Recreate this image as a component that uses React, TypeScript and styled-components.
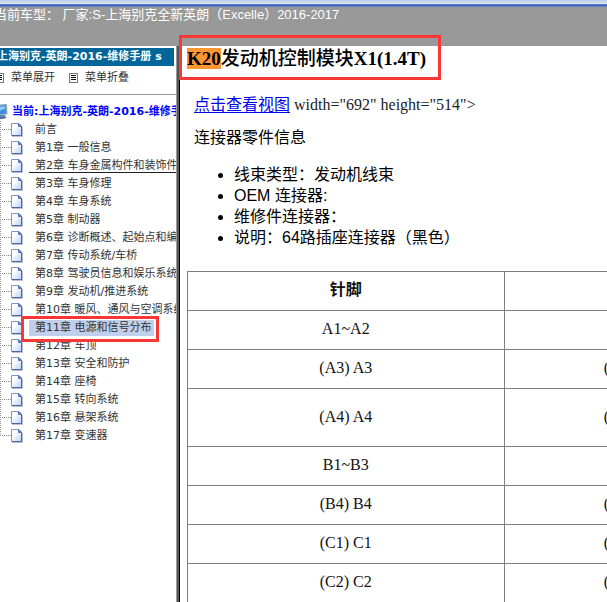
import React from "react";
import styled, { createGlobalStyle, css } from "styled-components";

const GlobalStyle = createGlobalStyle`
  *, *::before, *::after { box-sizing: border-box; }
  html, body, #root { height: 100%; margin: 0; }
  body { background: #fff; overflow: hidden; }
`;

const serif = `"Liberation Serif", "Noto Sans CJK SC", serif`;
const sans = `"Liberation Sans", "Noto Sans CJK SC", sans-serif`;
const verdana = `"DejaVu Sans", "Noto Sans CJK SC", sans-serif`;

const Page = styled.div`
  display: flex;
  flex-direction: column;
  height: 100%;
  margin-left: -6px;
`;

const WindowEdge = styled.div`
  flex: none;
  height: 7px;
  background: linear-gradient(#c3cfec 0 1px, #ccd7f1 1px 3px, #dfe6f8 3px 4px, #5577c4 4px 5px, #3c64bd 5px 6px, #6582c0 6px 7px);
`;

const Banner = styled.header`
  flex: none;
  height: 39px;
  background: #999;
  color: #fff;
  font: 13px/15px ${sans};
  white-space: pre;
`;

const Body = styled.div`
  flex: 1;
  min-height: 0;
  display: flex;
`;

const Sidebar = styled.aside`
  flex: none;
  width: 182px;
  padding-top: 2px;
  overflow: hidden;
  color: #333;
  font: 11px/18px ${verdana};
  white-space: nowrap;
`;

const ManualTitle = styled.h2`
  margin: 0 2px 0 0;
  padding-left: 3px;
  background: #069;
  color: #fff;
  font-size: 11px;
  line-height: 18px;
`;

const Toolbar = styled.div`
  display: flex;
  gap: 14px;
  height: 29px;
  padding: 3px 0 0 1px;
  border-bottom: 1px solid #999;
`;

const ToolButton = styled.button`
  display: flex;
  align-items: center;
  gap: 7px;
  height: 18px;
  padding: 0;
  border: 0;
  background: none;
  color: inherit;
  font: inherit;
`;

const TreeRoot = styled.a`
  display: flex;
  align-items: center;
  gap: 4px;
  height: 18px;
  margin-top: 8px;
  color: #00f;
  font-weight: bold;
  text-decoration: none;

  svg {
    flex: none;
  }
`;

const Tree = styled.ul`
  margin: 0 0 0 6px;
  padding: 0;
  list-style: none;
`;

const Branch = styled.li`
  display: flex;
  align-items: center;
  height: 18px;
  background:
    repeating-linear-gradient(#999 0 1px, transparent 1px 2px) 0 0 / 1px 100% no-repeat,
    repeating-linear-gradient(90deg, #888 0 1px, transparent 1px 2px) 0 8px / 11px 1px no-repeat;

  &:last-child {
    background-size: 1px 9px, 11px 1px;
  }
`;

const PageIcon = styled.svg`
  flex: none;
  margin-left: 11px;
`;

const ChapterLink = styled.a<{ $state?: "hover" | "selected" }>`
  position: relative;
  flex: none;
  height: 16px;
  margin-left: 6px;
  padding: 0 2px 0 6px;
  color: #333;
  line-height: 16px;
  text-decoration: none;

  ${(p) => p.$state === "hover" && css`
    height: 14px;
    line-height: 14px;
    border-bottom: 1px solid #222;
  `}
  ${(p) => p.$state === "selected" && css`background: #c0cfec;`}
`;

const Marker = styled.span<{ $inset: string }>`
  position: absolute;
  z-index: 2;
  inset: ${(p) => p.$inset};
  border: 3px solid #fa3737;
  pointer-events: none;
`;

const Content = styled.main`
  flex: 1;
  min-width: 0;
  padding: 2px 0 0 7px;
  border-left: 4px solid #000;
  border-image: linear-gradient(90deg, #999 0 1px, #555 1px 3px, #000 3px 4px) 0 0 0 4;
  color: #000;
  font: 16px/18px ${serif};
`;

const Heading = styled.h1`
  position: relative;
  width: fit-content;
  margin: 0;
  font-size: 19px;
  line-height: 22px;
  white-space: nowrap;
`;

const Highlight = styled.mark`
  background: #ff9632;
  color: #000;
`;

const HeadingText = styled.span`
  font-weight: 500;
`;

const Paragraph = styled.p`
  margin: 0;
  padding: 26px 0 0 7px;
  line-height: 18px;
  color: #222;

  & + & {
    padding-top: 15px;
    color: #000;
  }
`;

const ViewLink = styled.a`
  color: #00e;
  text-underline-offset: 2px;
`;

const Details = styled.ul`
  margin: 17px 0 23px;
  padding: 0 0 0 47px;
  font-family: ${sans};
  line-height: 21px;
`;

const TableFrame = styled.div`
  overflow: hidden;
`;

const PinTable = styled.table`
  width: calc(100% + 3px);
  table-layout: fixed;
  border-collapse: collapse;
  color: #111;
`;

const cell = css<{ $tall?: boolean }>`
  height: ${(p) => (p.$tall ? 58 : 39)}px;
  padding: 0 0 2px;
  border: 1px solid #808080;
  line-height: 18px;
`;

const HeadCell = styled.th<{ $wide?: boolean }>`
  ${cell}
  width: ${(p) => (p.$wide ? "75%" : "25%")};
`;

const PinCell = styled.td<{ $tall?: boolean }>`
  ${cell}
  text-align: center;
`;

const NameCell = styled.td<{ $tall?: boolean }>`
  ${cell}
  text-align: right;
`;

const MenuIcon = () => (
  <svg width="9" height="10" viewBox="0 0 9 10" shapeRendering="crispEdges" aria-hidden="true">
    <path d="M.5.5h8v9h-8z" fill="#fff" stroke="#777" />
    <path d="M2 2.5h5M2 4.5h5M2 6.5h5" stroke="#111" />
  </svg>
);

const ComputerIcon = () => (
  <svg width="14" height="16" viewBox="0 0 14 16" aria-hidden="true">
    <path d="M1 1.5 12.5.5 13 10 2 11z" fill="#3b8fe0" stroke="#98a8bc" />
    <path d="M3 3 11 2.300 11 5Q7 5 4 9H3z" fill="#8fd0fb" />
    <path d="M6 11h5l1 3-6 1-3-1z" fill="#6688b4" />
    <path d="M5 14.500 12 13.500" stroke="#334e80" />
  </svg>
);

const DocIcon = () => (
  <PageIcon width="12" height="14" viewBox="0 0 12 14" aria-hidden="true">
    <defs>
      <linearGradient id="sheet" x1="0" y1="0" x2="1" y2="1">
        <stop offset="0.3" stopColor="#fff" />
        <stop offset="1" stopColor="#b5d3fa" />
      </linearGradient>
    </defs>
    <path d="M.5.5H8L10.500 3V12.500H.5z" fill="url(#sheet)" stroke="#7f96ca" />
    <path d="M10.500 3V12.500H1" fill="none" stroke="#50649c" />
    <path d="M7.500.5V3.500H10.500z" fill="#6f8dcc" stroke="#5872b4" />
    <path d="M1 13.500H11.500V4" fill="none" stroke="#b9bfd0" />
  </PageIcon>
);

const chapters: { label: string; state?: "hover" | "selected" }[] = [
  { label: "前言" },
  { label: "第1章 一般信息" },
  { label: "第2章 车身金属构件和装饰件", state: "hover" },
  { label: "第3章 车身修理" },
  { label: "第4章 车身系统" },
  { label: "第5章 制动器" },
  { label: "第6章 诊断概述、起始点和编" },
  { label: "第7章 传动系统/车桥" },
  { label: "第8章 驾驶员信息和娱乐系统" },
  { label: "第9章 发动机/推进系统" },
  { label: "第10章 暖风、通风与空调系统" },
  { label: "第11章 电源和信号分布", state: "selected" },
  { label: "第12章 车顶" },
  { label: "第13章 安全和防护" },
  { label: "第14章 座椅" },
  { label: "第15章 转向系统" },
  { label: "第16章 悬架系统" },
  { label: "第17章 变速器" },
];

const pins: { pin: string; name?: string; tall?: boolean }[] = [
  { pin: "A1~A2" },
  { pin: "(A3) A3", name: "(" },
  { pin: "(A4) A4", name: "(", tall: true },
  { pin: "B1~B3" },
  { pin: "(B4) B4", name: "(" },
  { pin: "(C1) C1", name: "(" },
  { pin: "(C2) C2", name: "(" },
];

export default function App() {
  return (
    <>
      <GlobalStyle />
      <Page>
        <WindowEdge />
        <Banner>当前车型： 厂家:S-上海别克全新英朗（Excelle）2016-2017</Banner>
        <Body>
          <Sidebar>
            <ManualTitle>上海别克-英朗-2016-维修手册 s</ManualTitle>
            <Toolbar>
              <ToolButton type="button"><MenuIcon />菜单展开</ToolButton>
              <ToolButton type="button"><MenuIcon />菜单折叠</ToolButton>
            </Toolbar>
            <TreeRoot href="#root"><ComputerIcon />当前:上海别克-英朗-2016-维修手册</TreeRoot>
            <Tree>
              {chapters.map((c) => (
                <Branch key={c.label}>
                  <DocIcon />
                  <ChapterLink href="#chapter" $state={c.state}>
                    {c.label}
                    {c.state === "selected" && <Marker $inset="-4px -5px -6px -8px" />}
                  </ChapterLink>
                </Branch>
              ))}
            </Tree>
          </Sidebar>
          <Content>
            <Heading>
              <Highlight>K20</Highlight><HeadingText>发动机控制模块</HeadingText>X1(1.4T)
              <Marker $inset="-13px -15px -10px -8px" />
            </Heading>
            <Paragraph>
              <ViewLink href="#view">点击查看视图</ViewLink> width="692" height="514"&gt;
            </Paragraph>
            <Paragraph>连接器零件信息</Paragraph>
            <Details>
              <li>线束类型：发动机线束</li>
              <li>OEM 连接器:</li>
              <li>维修件连接器：</li>
              <li>说明：64路插座连接器（黑色）</li>
            </Details>
            <TableFrame>
              <PinTable>
                <thead>
                  <tr>
                    <HeadCell scope="col" $wide>针脚</HeadCell>
                    <HeadCell scope="col" />
                  </tr>
                </thead>
                <tbody>
                  {pins.map((p) => (
                    <tr key={p.pin}>
                      <PinCell $tall={p.tall}>{p.pin}</PinCell>
                      <NameCell $tall={p.tall}>{p.name}</NameCell>
                    </tr>
                  ))}
                </tbody>
              </PinTable>
            </TableFrame>
          </Content>
        </Body>
      </Page>
    </>
  );
}
